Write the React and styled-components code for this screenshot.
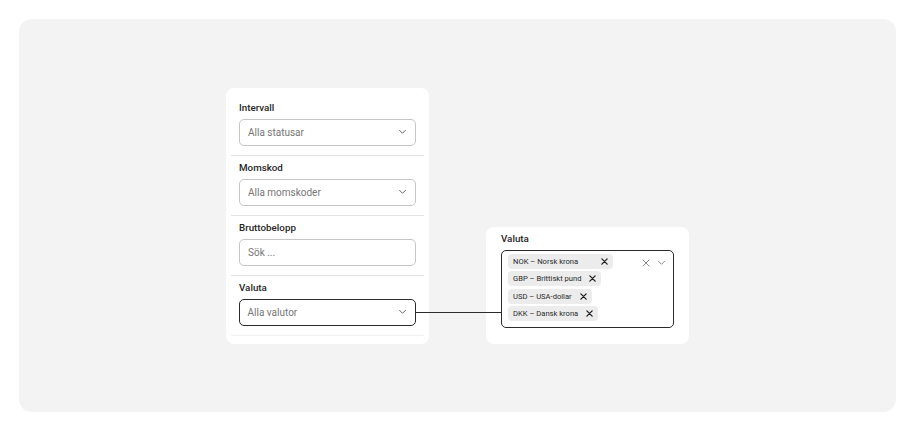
import React from 'react';
import styled, { createGlobalStyle } from 'styled-components';

const GlobalStyle = createGlobalStyle`
  html, body, #root {
    height: 100%;
  }
  body {
    margin: 0;
    background: #ffffff;
    font-family: Roboto, "Noto Sans", sans-serif;
    color: #1f1f1f;
  }
  * {
    box-sizing: border-box;
  }
`;

const Page = styled.div`
  height: 100%;
  padding: 19px;
`;

const Canvas = styled.div`
  height: 100%;
  background: #f3f3f3;
  border-radius: 13px;
  display: flex;
  justify-content: center;
  align-items: center;
`;

const Row = styled.div`
  display: flex;
  align-items: flex-end;
  gap: 57px;
`;

const Card = styled.div`
  width: 203px;
  background: #ffffff;
  border-radius: 8px;
  padding: ${p => p.$padding};
`;

const Section = styled.div`
  padding: 0 8px 9px;
  border-bottom: 1px solid ${p => (p.$last ? '#f1f1f1' : '#e4e4e4')};
  margin-bottom: ${p => (p.$last ? '0' : '5px')};
`;

const Label = styled.div`
  font-size: 9.8px;
  font-weight: 500;
  line-height: 14px;
  color: #262626;
  margin-bottom: ${p => p.$gap || '4px'};
`;

const Field = styled.div`
  height: 27px;
  border: ${p => (p.$active ? '1.5px solid #2b2b2b' : '1px solid #c6c6c6')};
  border-radius: 5px;
  display: flex;
  align-items: center;
  justify-content: space-between;
  padding: 0 8px 0 ${p => (p.$active ? '7.5px' : '8px')};
  font-size: 10px;
  color: #767676;
  background: #fff;
`;

const Chevron = ({ color = '#6b6b6b' }) => (
  <svg width="9" height="6" viewBox="0 0 9 6" fill="none">
    <path d="M1.5 1.3 L4.5 4.3 L7.5 1.3" stroke={color} strokeWidth="1" strokeLinecap="round" strokeLinejoin="round" />
  </svg>
);

const Cross = ({ size = 8, color = '#222', width = 1.6 }) => (
  <svg width={size} height={size} viewBox="0 0 8 8" fill="none">
    <path d="M1 1 L7 7 M7 1 L1 7" stroke={color} strokeWidth={width} strokeLinecap="round" />
  </svg>
);

const MultiBox = styled.div`
  position: relative;
  height: 78px;
  border: 1.5px solid #2b2b2b;
  border-radius: 5px;
  padding: 3px 0 0 6px;
  display: flex;

  &::before {
    content: "";
    position: absolute;
    left: -87px;
    top: 61px;
    width: 86px;
    height: 1.5px;
    background: #2b2b2b;
  }
`;

const ChipList = styled.div`
  flex: 1;
  display: flex;
  flex-direction: column;
  align-items: flex-start;
  gap: 2.6px;
`;

const Chip = styled.div`
  height: 15px;
  min-width: ${p => p.$minWidth || 'auto'};
  display: flex;
  align-items: center;
  justify-content: space-between;
  gap: 8px;
  padding: 0 5px 0 5px;
  background: #ececec;
  border-radius: 4px;
  font-size: 7.6px;
  color: #2a2a2a;
  white-space: nowrap;
`;

const Actions = styled.div`
  display: flex;
  align-items: center;
  gap: 7px;
  height: 12px;
  margin: 3px 7px 0 0;
`;

const currencies = [
  { text: 'NOK – Norsk krona', minWidth: '105px' },
  { text: 'GBP – Brittiskt pund' },
  { text: 'USD – USA-dollar' },
  { text: 'DKK – Dansk krona' },
];

const filters = [
  { label: 'Intervall', placeholder: 'Alla statusar', select: true },
  { label: 'Momskod', placeholder: 'Alla momskoder', select: true },
  { label: 'Bruttobelopp', placeholder: 'Sök ...' },
  { label: 'Valuta', placeholder: 'Alla valutor', select: true, active: true },
];

export default function App() {
  return (
    <>
      <GlobalStyle />
      <Page>
        <Canvas>
          <Row>
            <Card $padding="13px 5px 8px">
              {filters.map((f, i) => (
                <Section key={f.label} $last={i === filters.length - 1}>
                  <Label>{f.label}</Label>
                  <Field $active={f.active}>
                    <span>{f.placeholder}</span>
                    {f.select && <Chevron />}
                  </Field>
                </Section>
              ))}
            </Card>
            <Card $padding="5px 15px 16px">
              <Label $gap="4px">Valuta</Label>
              <MultiBox>
                <ChipList>
                  {currencies.map(c => (
                    <Chip key={c.text} $minWidth={c.minWidth}>
                      <span>{c.text}</span>
                      <Cross size={7} width={1.5} />
                    </Chip>
                  ))}
                </ChipList>
                <Actions>
                  <Cross size={8} color="#8a8a8a" width={1} />
                  <Chevron color="#8a8a8a" />
                </Actions>
              </MultiBox>
            </Card>
          </Row>
        </Canvas>
      </Page>
    </>
  );
}
